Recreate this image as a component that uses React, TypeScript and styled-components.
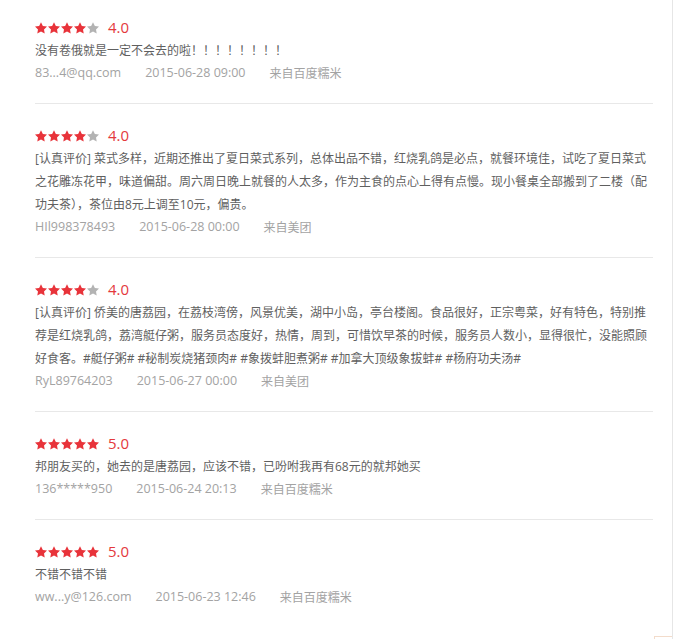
import { FC } from 'react';
import styled, { createGlobalStyle } from 'styled-components';

const GlobalStyle = createGlobalStyle`
	html, body {
		margin: 0;
		padding: 0;
		background: #fff;
	}
	body {
		font-family: 'Open Sans', 'Noto Sans CJK SC', sans-serif;
	}
`;

interface Review {
	score: number;
	text: string;
	user: string;
	date: string;
	source: string;
}

const reviews: Review[] = [
	{
		score: 4,
		text: '没有卷俄就是一定不会去的啦！！！！！！！！',
		user: '83...4@qq.com',
		date: '2015-06-28 09:00',
		source: '来自百度糯米',
	},
	{
		score: 4,
		text: '[认真评价] 菜式多样，近期还推出了夏日菜式系列，总体出品不错，红烧乳鸽是必点，就餐环境佳，试吃了夏日菜式之花雕冻花甲，味道偏甜。周六周日晚上就餐的人太多，作为主食的点心上得有点慢。现小餐桌全部搬到了二楼（配功夫茶），茶位由8元上调至10元，偏贵。',
		user: 'HIl998378493',
		date: '2015-06-28 00:00',
		source: '来自美团',
	},
	{
		score: 4,
		text: '[认真评价] 侨美的唐荔园，在荔枝湾傍，风景优美，湖中小岛，亭台楼阁。食品很好，正宗粤菜，好有特色，特别推荐是红烧乳鸽，荔湾艇仔粥，服务员态度好，热情，周到，可惜饮早茶的时候，服务员人数小，显得很忙，没能照顾好食客。#艇仔粥# #秘制炭烧猪颈肉# #象拨蚌胆煮粥# #加拿大顶级象拔蚌# #杨府功夫汤#',
		user: 'RyL89764203',
		date: '2015-06-27 00:00',
		source: '来自美团',
	},
	{
		score: 5,
		text: '邦朋友买的，她去的是唐荔园，应该不错，已吩咐我再有68元的就邦她买',
		user: '136*****950',
		date: '2015-06-24 20:13',
		source: '来自百度糯米',
	},
	{
		score: 5,
		text: '不错不错不错',
		user: 'ww...y@126.com',
		date: '2015-06-23 12:46',
		source: '来自百度糯米',
	},
];

const Page = styled.div`
	position: relative;
	width: 673px;
	height: 639px;
	border-right: 1px solid #e6e6e6;
	box-sizing: border-box;
	overflow: hidden;
`;

const List = styled.ul`
	list-style: none;
	margin: 0;
	padding: 0 0 0 35px;
	width: 618px;
`;

const Item = styled.li`
	padding: 20px 0;
	border-bottom: 1px solid #e8e8e8;

	&:first-child {
		padding-top: 16px;
	}

	&:last-child {
		border-bottom: none;
	}
`;

const RatingRow = styled.div`
	display: flex;
	align-items: center;
	height: 23px;
`;

const Stars = styled.div`
	display: flex;
	gap: 1px;
`;

const Score = styled.span`
	margin-left: 9px;
	font-size: 15px;
	color: #e4393c;
	line-height: 23px;
`;

const Body = styled.p`
	margin: 0;
	font-size: 12px;
	line-height: 23px;
	color: #5f5f5f;
	word-break: break-all;
`;

const Meta = styled.div`
	display: flex;
	height: 21px;
	align-items: center;
	color: #a3a3a3;
`;

const MetaItem = styled.span<{ $cjk?: boolean }>`
	margin-right: 24px;
	font-size: ${p => (p.$cjk ? '12px' : '12.5px')};
	white-space: nowrap;
`;

const TopButton = styled.div`
	position: absolute;
	left: 654px;
	top: 636px;
	width: 18px;
	height: 18px;
	border: 1px solid #f3dccb;
	background: #fff;
`;

const Star: FC<{ on: boolean }> = ({ on }) => (
	<svg width="12" height="12" viewBox="2 2 20 19.5">
		<path
			d="M12 2l3.09 6.26L22 9.27l-5 4.87 1.18 6.88L12 17.77l-6.18 3.25L7 14.14 2 9.27l6.91-1.01L12 2z"
			fill={on ? '#e8333a' : '#b3b3b3'}
		/>
	</svg>
);

const ReviewItem: FC<{ review: Review }> = ({ review }) => (
	<Item>
		<RatingRow>
			<Stars>
				{[1, 2, 3, 4, 5].map(i => (
					<Star key={i} on={i <= review.score} />
				))}
			</Stars>
			<Score>{review.score.toFixed(1)}</Score>
		</RatingRow>
		<Body>{review.text}</Body>
		<Meta>
			<MetaItem>{review.user}</MetaItem>
			<MetaItem>{review.date}</MetaItem>
			<MetaItem $cjk>{review.source}</MetaItem>
		</Meta>
	</Item>
);

export default function App() {
	return (
		<>
			<GlobalStyle />
			<Page>
				<List>
					{reviews.map(r => (
						<ReviewItem key={r.user} review={r} />
					))}
				</List>
				<TopButton />
			</Page>
		</>
	);
}
